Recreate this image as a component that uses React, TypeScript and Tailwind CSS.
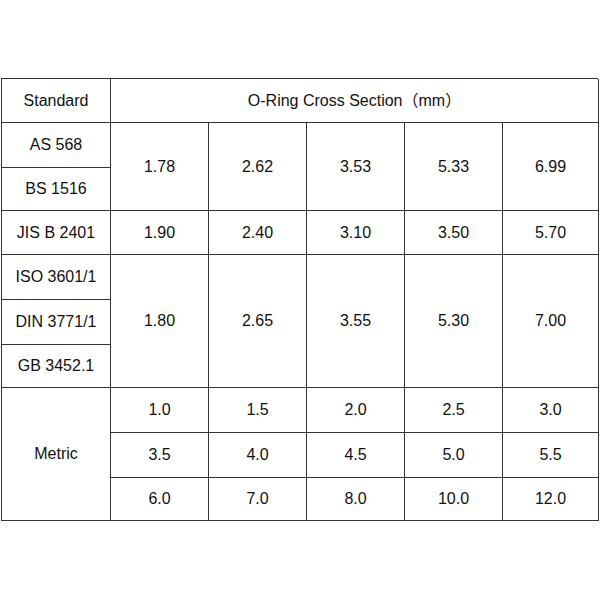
import React from "react";

const cell = "flex items-center justify-center border-r border-b border-[#333]";

const rowsTpl = "grid-rows-[44px_45px_43px_44px_45px_45px_43px_45px_45px_43px]";

export default function App() {
  const ring = ["1.78", "2.62", "3.53", "5.33", "6.99"];
  const jis = ["1.90", "2.40", "3.10", "3.50", "5.70"];
  const iso = ["1.80", "2.65", "3.55", "5.30", "7.00"];
  const metric = [
    ["1.0", "1.5", "2.0", "2.5", "3.0"],
    ["3.5", "4.0", "4.5", "5.0", "5.5"],
    ["6.0", "7.0", "8.0", "10.0", "12.0"],
  ];
  const colStart = ["col-start-2", "col-start-3", "col-start-4", "col-start-5", "col-start-6"];
  const rowStartMetric = ["row-start-8", "row-start-9", "row-start-10"];
  return (
    <div
      className="w-[600px] h-[600px] bg-white pt-[78px] pl-[1px] text-[16px] text-[#111]"
      style={{ fontFamily: '"Liberation Sans", Arial, "Noto Sans CJK SC", sans-serif' }}
    >
      <div
        className={`grid grid-cols-[109px_98px_98px_98px_98px_96px] ${rowsTpl} w-[597px] border-l border-t border-[#333]`}
      >
        <div className={`${cell} col-start-1 row-start-1`}>Standard</div>
        <div className={`${cell} col-start-2 col-span-5 row-start-1`}>O-Ring Cross Section（mm）</div>

        <div className={`${cell} col-start-1 row-start-2`}>AS 568</div>
        <div className={`${cell} col-start-1 row-start-3`}>BS 1516</div>
        {ring.map((v, i) => (
          <div key={"r" + i} className={`${cell} ${colStart[i]} row-start-2 row-span-2`}>{v}</div>
        ))}

        <div className={`${cell} col-start-1 row-start-4`}>JIS B 2401</div>
        {jis.map((v, i) => (
          <div key={"j" + i} className={`${cell} ${colStart[i]} row-start-4`}>{v}</div>
        ))}

        <div className={`${cell} col-start-1 row-start-5`}>ISO 3601/1</div>
        <div className={`${cell} col-start-1 row-start-6`}>DIN 3771/1</div>
        <div className={`${cell} col-start-1 row-start-7`}>GB 3452.1</div>
        {iso.map((v, i) => (
          <div key={"i" + i} className={`${cell} ${colStart[i]} row-start-5 row-span-3`}>{v}</div>
        ))}

        <div className={`${cell} col-start-1 row-start-8 row-span-3`}>Metric</div>
        {metric.map((row, r) =>
          row.map((v, i) => (
            <div key={"m" + r + i} className={`${cell} ${colStart[i]} ${rowStartMetric[r]}`}>{v}</div>
          ))
        )}
      </div>
    </div>
  );
}
